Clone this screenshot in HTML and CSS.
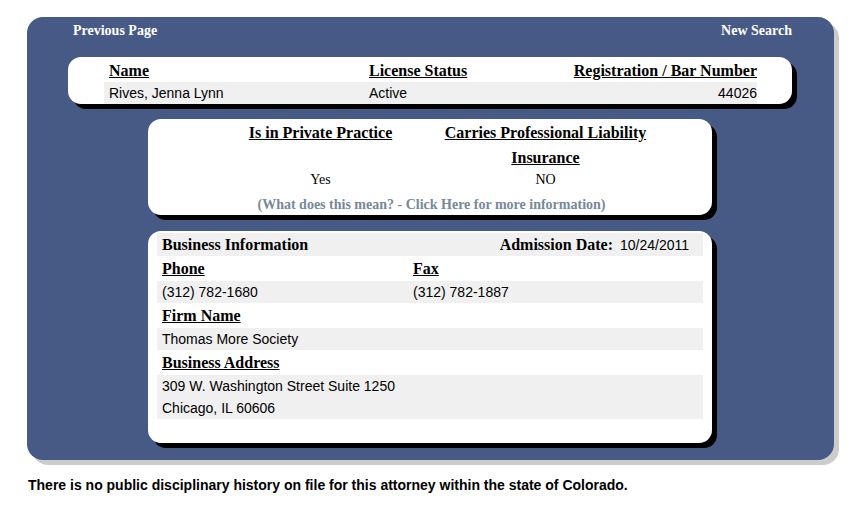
FILE: index.html
```html
<!DOCTYPE html>
<html>
<head>
<meta charset="utf-8">
<link rel="stylesheet" href="styles.css">
</head>
<body>
<div class="page">
  <div class="panel">
    <div class="nav">
      <a class="nav-link" href="#">Previous Page</a>
      <a class="nav-link" href="#">New Search</a>
    </div>

    <div class="card card-main">
      <div class="main-grid">
        <div class="hd">Name</div>
        <div class="hd">License Status</div>
        <div class="hd right">Registration / Bar Number</div>
        <div class="cell grey">Rives, Jenna Lynn</div>
        <div class="cell grey">Active</div>
        <div class="cell grey right">44026</div>
      </div>
    </div>

    <div class="card card-practice">
      <div class="practice-grid">
        <div class="phd"><span class="u">Is in Private Practice</span></div>
        <div class="phd"><span class="u">Carries Professional Liability Insurance</span></div>
        <div class="pval">Yes</div>
        <div class="pval">NO</div>
      </div>
      <a class="info-link" href="#">(What does this mean? - Click Here for more information)</a>
    </div>

    <div class="card card-biz">
      <div class="biz-title grey">
        <span class="bold-serif">Business Information</span>
        <span class="adm"><span class="bold-serif">Admission Date:</span><span class="sans">10/24/2011</span></span>
      </div>
      <div class="two-col">
        <div class="bhd"><span class="u">Phone</span></div>
        <div class="bhd"><span class="u">Fax</span></div>
      </div>
      <div class="two-col grey">
        <div class="bval">(312) 782-1680</div>
        <div class="bval">(312) 782-1887</div>
      </div>
      <div class="bhd"><span class="u">Firm Name</span></div>
      <div class="bval grey">Thomas More Society</div>
      <div class="bhd"><span class="u">Business Address</span></div>
      <div class="addr grey">
        <div class="bval">309 W. Washington Street Suite 1250</div>
        <div class="bval">Chicago, IL 60606</div>
      </div>
    </div>
  </div>

  <p class="notice">There is no public disciplinary history on file for this attorney within the state of Colorado.</p>
</div>
</body>
</html>
```

FILE: styles.css
```css
html, body {
  margin: 0;
  padding: 0;
  background: #ffffff;
}

.page {
  padding: 17px 0 0 27px;
}

.panel {
  box-sizing: border-box;
  width: 807px;
  height: 443px;
  background: #475a85;
  border-radius: 16px;
  box-shadow: 5px 5px 0 #cccccc;
  overflow: visible;
}

.nav {
  display: flex;
  justify-content: space-between;
  padding: 6px 42px 0 46px;
  height: 16px;
}

.nav-link {
  font-family: "Liberation Serif", "Times New Roman", serif;
  font-weight: bold;
  font-size: 14px;
  line-height: 16px;
  color: #ffffff;
  text-decoration: none;
}

.card {
  box-sizing: border-box;
  background: #ffffff;
  border-radius: 13px;
  box-shadow: 5px 5px 0 #000000;
}

.card-main {
  margin: 18px 0 0 41px;
  width: 724px;
  height: 47px;
  padding: 3px 35px 0 36px;
}

.main-grid {
  display: grid;
  grid-template-columns: 260px 200px 1fr;
}

.hd {
  font-family: "Liberation Serif", "Times New Roman", serif;
  font-weight: bold;
  font-size: 16px;
  line-height: 22px;
  height: 22px;
  padding-left: 5px;
  text-decoration: underline;
  color: #000;
}

.hd.right {
  text-align: right;
  padding-left: 0;
}

.cell {
  font-family: "Liberation Sans", Arial, sans-serif;
  font-size: 14px;
  line-height: 22px;
  height: 22px;
  padding-left: 5px;
  color: #000;
}

.cell.right {
  text-align: right;
  padding-left: 0;
}

.grey {
  background: #f0f0f0;
}

.card-practice {
  margin: 15px 0 0 121px;
  width: 564px;
  height: 96px;
  padding-top: 1px;
}

.practice-grid {
  display: grid;
  grid-template-columns: 225px 225px;
  margin-left: 60px;
}

.phd {
  font-family: "Liberation Serif", "Times New Roman", serif;
  font-weight: bold;
  font-size: 16px;
  line-height: 25px;
  text-align: center;
  color: #000;
}

.u {
  text-decoration: underline;
}

.pval {
  font-family: "Liberation Serif", "Times New Roman", serif;
  font-size: 14px;
  line-height: 19px;
  text-align: center;
  color: #000;
}

.info-link {
  display: block;
  margin-top: 4px;
  margin-left: 3px;
  font-family: "Liberation Serif", "Times New Roman", serif;
  font-weight: bold;
  font-size: 14px;
  line-height: 24px;
  text-align: center;
  color: #778899;
  text-decoration: none;
}

.card-biz {
  margin: 16px 0 0 121px;
  width: 564px;
  height: 212px;
  padding: 2px 9px 0 9px;
}

.biz-title {
  display: flex;
  justify-content: space-between;
  align-items: baseline;
  height: 23px;
  line-height: 23px;
  padding: 0 14px 0 5px;
}

.adm {
  display: flex;
  align-items: baseline;
  gap: 7px;
}

.bold-serif {
  font-family: "Liberation Serif", "Times New Roman", serif;
  font-weight: bold;
  font-size: 16px;
  color: #000;
}

.sans {
  font-family: "Liberation Sans", Arial, sans-serif;
  font-size: 14px;
  color: #000;
}

.two-col {
  display: grid;
  grid-template-columns: 251px 1fr;
}

.bhd {
  font-family: "Liberation Serif", "Times New Roman", serif;
  font-weight: bold;
  font-size: 16px;
  line-height: 25px;
  height: 25px;
  padding-left: 5px;
  color: #000;
}

.bval {
  font-family: "Liberation Sans", Arial, sans-serif;
  font-size: 14px;
  line-height: 22px;
  height: 22px;
  padding-left: 5px;
  color: #000;
}

.addr {
  height: 44px;
}

.notice {
  margin: 17px 0 0 1px;
  font-family: "Liberation Sans", Arial, sans-serif;
  font-weight: bold;
  font-size: 14px;
  line-height: 16px;
  color: #000;
}
```
